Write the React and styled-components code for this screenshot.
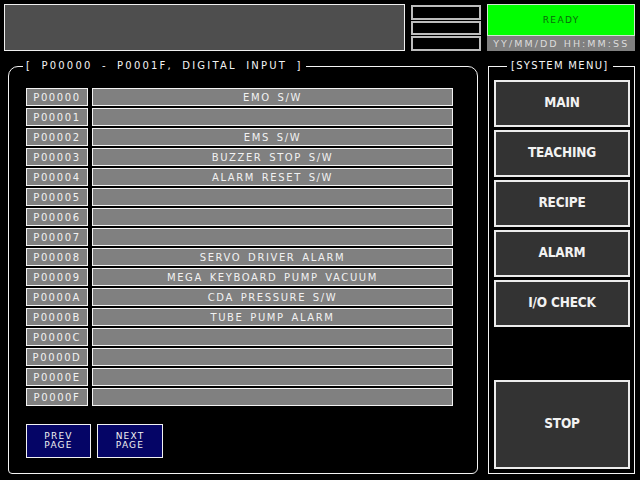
import React from "react";
import styled, { createGlobalStyle } from "styled-components";

const Global = createGlobalStyle`
  html, body { margin: 0; padding: 0; background: #000; }
  body { width: 640px; height: 480px; overflow: hidden; }
`;

const wide = `
  font-family: "DejaVu Sans", "Liberation Sans", sans-serif;
  font-size: 10px;
  letter-spacing: 1.6px;
`;

const Screen = styled.div`
  width: 640px;
  height: 480px;
  box-sizing: border-box;
  padding: 4px 5px 0 4px;
  background: #000;
  display: flex;
  flex-direction: column;
`;

const TopRow = styled.div`
  display: flex;
  height: 47px;
  gap: 6px;
`;

const MessageBox = styled.div`
  width: 402px;
  box-sizing: border-box;
  border: 1px solid #f0f0f0;
  background: #4e4e4e;
`;

const IndicatorColumn = styled.div`
  width: 71px;
  display: flex;
  flex-direction: column;
  gap: 1px;
  padding-top: 1px;
  box-sizing: border-box;
`;

const Indicator = styled.div`
  flex: 1;
  box-sizing: border-box;
  border: 2px solid #bdbdbd;
  background: #000;
`;

const StatusColumn = styled.div`
  width: 148px;
  display: flex;
  flex-direction: column;
`;

const ReadyBox = styled.div`
  height: 32px;
  box-sizing: border-box;
  border: 1px solid #cfe8cf;
  background: #00ff00;
  color: #0b6a0b;
  display: flex;
  align-items: center;
  justify-content: center;
  ${wide}
  font-size: 9px;
  letter-spacing: 1.4px;
`;

const DateBox = styled.div`
  height: 15px;
  box-sizing: border-box;
  background: #808080;
  color: #dcdcdc;
  display: flex;
  align-items: center;
  justify-content: center;
  ${wide}
  font-size: 9.5px;
  letter-spacing: 2.05px;
  white-space: nowrap;
  overflow: hidden;
`;

const MainRow = styled.div`
  display: flex;
  margin-top: 9px;
  height: 414px;
  gap: 10px;
`;

const Panel = styled.fieldset`
  margin: 0 0 0 ${(p) => p.$ml || 0}px;
  box-sizing: border-box;
  width: ${(p) => p.$w}px;
  height: 414px;
  border: 1px solid #f4f4f4;
  border-radius: ${(p) => p.$radius || "0"};
  padding: ${(p) => p.$pad};
  min-width: 0;
  display: flex;
  flex-direction: column;
`;

const PanelTitle = styled.legend`
  ${wide}
  color: #f4f4f4;
  line-height: 12px;
  padding: 0 ${(p) => p.$px || 3}px;
  margin-left: ${(p) => p.$ml}px;
  white-space: pre;
  letter-spacing: ${(p) => p.$ls || 1.6}px;
  word-spacing: ${(p) => p.$ws || 0}px;
`;

const IoTable = styled.div`
  display: grid;
  grid-template-columns: 62px 361px;
  column-gap: 4px;
  row-gap: 2px;
  width: 427px;
`;

const Cell = styled.div`
  height: 18px;
  box-sizing: border-box;
  border: 1px solid #f2f2f2;
  background: #808080;
  color: #f2f2f2;
  display: flex;
  align-items: center;
  justify-content: center;
  ${wide}
  white-space: pre;
  word-spacing: 2px;
  padding-top: 1px;
`;

const PageButtons = styled.div`
  display: flex;
  gap: 6px;
  margin-top: 18px;
`;

const PageButton = styled.div`
  width: ${(p) => p.$w}px;
  height: 34px;
  box-sizing: border-box;
  border: 1px solid #f2f2f2;
  background: #050566;
  color: #f2f2f2;
  display: flex;
  flex-direction: column;
  align-items: center;
  justify-content: center;
  ${wide}
  font-size: 9px;
  letter-spacing: 1.2px;
  line-height: 9px;
`;

const MenuButton = styled.div`
  height: ${(p) => (p.$tall ? 89 : 47)}px;
  margin-top: ${(p) => (p.$push ? "auto" : p.$first ? "0" : "3px")};
  box-sizing: border-box;
  border: 2px solid #ececec;
  background: #333333;
  color: #f2f2f2;
  display: flex;
  align-items: center;
  justify-content: center;
  padding-bottom: 3px;
  font-family: "DejaVu Sans Condensed", "DejaVu Sans", sans-serif;
  font-weight: bold;
  font-size: 13.5px;
  letter-spacing: -0.2px;
`;

const rows = [
  ["P00000", "EMO S/W"],
  ["P00001", ""],
  ["P00002", "EMS S/W"],
  ["P00003", "BUZZER STOP S/W"],
  ["P00004", "ALARM RESET S/W"],
  ["P00005", ""],
  ["P00006", ""],
  ["P00007", ""],
  ["P00008", "SERVO DRIVER ALARM"],
  ["P00009", "MEGA KEYBOARD PUMP VACUUM"],
  ["P0000A", "CDA PRESSURE S/W"],
  ["P0000B", "TUBE PUMP ALARM"],
  ["P0000C", ""],
  ["P0000D", ""],
  ["P0000E", ""],
  ["P0000F", ""],
];

const menu = ["MAIN", "TEACHING", "RECIPE", "ALARM", "I/O CHECK"];

export default function App() {
  return (
    <>
      <Global />
      <Screen>
        <TopRow>
          <MessageBox />
          <IndicatorColumn>
            <Indicator />
            <Indicator />
            <Indicator />
          </IndicatorColumn>
          <StatusColumn>
            <ReadyBox>READY</ReadyBox>
            <DateBox>YY/MM/DD HH:MM:SS</DateBox>
          </StatusColumn>
        </TopRow>
        <MainRow>
          <Panel $w={470} $ml={4} $radius="10px 10px 6px 4px" $pad="16px 0 0 17px">
            <PanelTitle $ml={-3} $ls={2.2} $ws={4}>
              [ P00000 - P0001F, DIGITAL INPUT ]
            </PanelTitle>
            <IoTable>
              {rows.map(([id, name]) => (
                <React.Fragment key={id}>
                  <Cell>{id}</Cell>
                  <Cell>{name}</Cell>
                </React.Fragment>
              ))}
            </IoTable>
            <PageButtons>
              <PageButton $w={65}>
                <span>PREV</span>
                <span>PAGE</span>
              </PageButton>
              <PageButton $w={66}>
                <span>NEXT</span>
                <span>PAGE</span>
              </PageButton>
            </PageButtons>
          </Panel>
          <Panel $w={147} $pad="8px 4px 4px 5px">
            <PanelTitle $ml={13} $px={4} $ls={1.3}>
              [SYSTEM MENU]
            </PanelTitle>
            {menu.map((m, i) => (
              <MenuButton key={m} $first={i === 0}>
                {m}
              </MenuButton>
            ))}
            <MenuButton $tall $push>
              STOP
            </MenuButton>
          </Panel>
        </MainRow>
      </Screen>
    </>
  );
}
